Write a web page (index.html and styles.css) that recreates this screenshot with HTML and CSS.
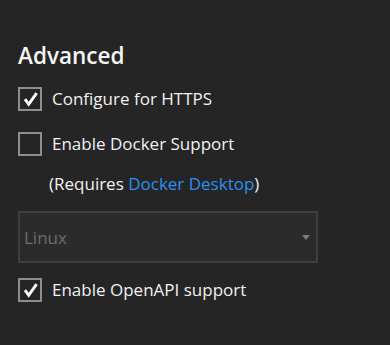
FILE: index.html
```html
<!DOCTYPE html>
<html>
<head>
  <title>Advanced</title>
  <link rel="stylesheet" href="styles.css">
</head>
<body>
  <div class="panel">
    <h2 class="section-title">Advanced</h2>

    <label class="option option-https">
      <span class="box checked">
        <svg viewBox="0 0 20 20" width="20" height="20"><path d="M5 10.2 L8.7 15.3 L16.6 4.2" /></svg>
      </span>
      <span class="label">Configure for HTTPS</span>
    </label>

    <label class="option option-docker">
      <span class="box"></span>
      <span class="label">Enable Docker Support</span>
    </label>

    <p class="note">(Requires <a href="#">Docker Desktop</a>)</p>

    <div class="select disabled">
      <span class="select-value">Linux</span>
      <span class="select-arrow"></span>
    </div>

    <label class="option option-openapi">
      <span class="box checked">
        <svg viewBox="0 0 20 20" width="20" height="20"><path d="M5 10.2 L8.7 15.3 L16.6 4.2" /></svg>
      </span>
      <span class="label">Enable OpenAPI support</span>
    </label>
  </div>
</body>
</html>
```

FILE: styles.css
```css
* {
  margin: 0;
  padding: 0;
  box-sizing: border-box;
}

body {
  background: #252526;
  color: #f1f1f1;
  font-family: 'Open Sans', 'Noto Sans', sans-serif;
  min-height: 100vh;
}

.panel {
  display: flex;
  flex-direction: column;
  padding: 42px 0 0 18px;
}

.section-title {
  font-size: 22.5px;
  font-weight: 600;
  line-height: 28px;
  color: #f5f5f5;
}

.option {
  display: flex;
  align-items: center;
  gap: 10px;
  height: 24px;
  cursor: pointer;
}

.option-https {
  margin-top: 17px;
}

.option-docker {
  margin-top: 21px;
}

.option-openapi {
  margin-top: 15px;
}

.box {
  width: 24px;
  height: 24px;
  border: 2px solid #8e8e8e;
  display: flex;
  align-items: center;
  justify-content: center;
  flex-shrink: 0;
}

.box svg path {
  fill: none;
  stroke: #ffffff;
  stroke-width: 2.9;
  stroke-linejoin: miter;
}

.label {
  font-size: 17px;
  line-height: 24px;
  color: #f1f1f1;
}

.note {
  margin-top: 16px;
  padding-left: 31px;
  font-size: 17px;
  line-height: 24px;
  color: #f1f1f1;
}

.note a {
  color: #2b8ff0;
  text-decoration: none;
}

.select {
  margin-top: 15px;
  width: 300px;
  height: 52px;
  border: 2px solid #3f3f40;
  background: #2b2b2c;
  display: flex;
  align-items: center;
  justify-content: space-between;
  padding: 0 6px 0 4px;
}

.select-value {
  font-size: 17px;
  color: #6d6d6d;
}

.select-arrow {
  width: 0;
  height: 0;
  border-left: 4.5px solid transparent;
  border-right: 4.5px solid transparent;
  border-top: 5px solid #7a7a7a;
}
```
